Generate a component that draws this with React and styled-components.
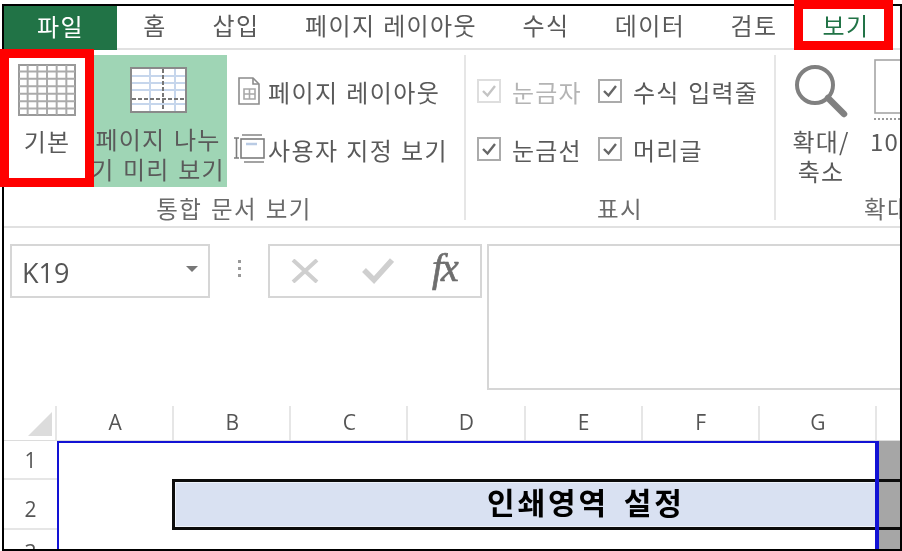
import styled, { createGlobalStyle } from "styled-components";

const KOREAN = `"Noto Sans CJK KR", "Noto Sans", sans-serif`;
const LATIN = `"Open Sans", "Noto Sans CJK KR", sans-serif`;

const GlobalStyle = createGlobalStyle`
  html, body {
    margin: 0;
    padding: 0;
    background: #ffffff;
  }
`;

const Page = styled.div`
  position: relative;
  width: 902px;
  height: 551px;
  overflow: hidden;
  padding: 4px 0 0 2px;
  box-sizing: border-box;
`;

const Frame = styled.div`
  width: 900px;
  height: 547px;
  box-sizing: border-box;
  border: 2px solid #000;
  overflow: hidden;
`;

const Screen = styled.div`
  filter: blur(0.45px);
  font-family: ${KOREAN};
  color: #5a5a5a;
`;

const RedBox = styled.div`
  position: absolute;
  box-sizing: border-box;
  border: 9px solid #ff0000;
  left: ${(p) => p.$left}px;
  top: ${(p) => p.$top}px;
  width: ${(p) => p.$width}px;
  height: ${(p) => p.$height}px;
`;

/* tabs */
const TabBar = styled.div`
  display: flex;
  height: 44px;
  box-sizing: border-box;
  border-bottom: 2px solid #e1e1e1;
`;

const Tab = styled.div`
  width: ${(p) => p.$width}px;
  flex: none;
  display: flex;
  align-items: center;
  justify-content: center;
  font-size: 24px;
  letter-spacing: 1.4px;
  word-spacing: 1px;
  white-space: nowrap;
  padding-bottom: 6px;
  box-sizing: border-box;
  background: ${(p) => (p.$file ? "#217346" : "transparent")};
  color: ${(p) => (p.$file ? "#ffffff" : p.$active ? "#217346" : "#5a5a5a")};
  height: ${(p) => (p.$file ? "44px" : "42px")};
`;

/* ribbon */
const Ribbon = styled.div`
  display: flex;
  height: 178px;
  box-sizing: border-box;
  border-bottom: 2px solid #e1e1e1;
  overflow: hidden;
`;

const Group = styled.div`
  flex: none;
  width: ${(p) => p.$width}px;
  margin-top: 5px;
  height: 165px;
  display: flex;
  flex-direction: column;
  box-sizing: border-box;
  border-right: ${(p) => (p.$last ? "none" : "2px solid #e6e6e6")};
`;

const GroupBody = styled.div`
  height: 132px;
  display: flex;
  padding-left: ${(p) => p.$pad || 0}px;
`;

const GroupLabel = styled.div`
  height: 33px;
  padding-top: 9px;
  padding-left: ${(p) => p.$pad || 0}px;
  box-sizing: border-box;
  display: flex;
  align-items: center;
  justify-content: ${(p) => (p.$pad ? "flex-start" : "center")};
  font-size: 23.5px;
  letter-spacing: 1.4px;
  word-spacing: 2px;
  white-space: nowrap;
  color: #6a6a6a;
`;

const BigButton = styled.div`
  flex: none;
  width: ${(p) => p.$width}px;
  height: 132px;
  box-sizing: border-box;
  padding: ${(p) => p.$top}px ${(p) => p.$right || 0}px 0 0;
  display: flex;
  flex-direction: column;
  align-items: center;
  background: ${(p) => (p.$active ? "#9fd5b5" : "transparent")};
`;

const ZoomButton = styled.div`
  flex: none;
  height: 132px;
  box-sizing: border-box;
  padding: 4px 0 0 4px;
  display: flex;
  flex-direction: column;
  align-items: flex-start;
`;

const ZoomPage = styled.div`
  margin-left: 4px;
`;

const BigLabel = styled.div`
  margin-top: ${(p) => p.$gap}px;
  font-size: 24px;
  line-height: 30px;
  letter-spacing: 1.2px;
  word-spacing: 2px;
  text-align: center;
  white-space: nowrap;
`;

const SmallColumn = styled.div`
  padding-top: 7px;
  flex: none;
`;

const SmallRow = styled.div`
  height: 58px;
  display: flex;
  align-items: center;
  font-size: 24px;
  letter-spacing: 1.4px;
  word-spacing: 1px;
  white-space: nowrap;
`;

const IconSlot = styled.div`
  width: 38px;
  margin-left: 3px;
  display: flex;
  justify-content: center;
`;

const CheckGrid = styled.div`
  display: grid;
  grid-template-columns: 121px auto;
  grid-auto-rows: 58px;
  padding-top: 7px;
`;

const CheckRow = styled.div`
  display: flex;
  align-items: center;
  gap: 11px;
  font-size: 24px;
  letter-spacing: 1.2px;
  word-spacing: 2px;
  white-space: nowrap;
  color: ${(p) => (p.$disabled ? "#b4b4b4" : "#5a5a5a")};
`;

const Box = styled.span`
  width: 24px;
  height: 24px;
  flex: none;
  box-sizing: border-box;
  border: 2px solid ${(p) => (p.$disabled ? "#dedede" : "#ababab")};
  display: flex;
  align-items: center;
  justify-content: center;
  color: ${(p) => (p.$disabled ? "#c4c4c4" : "#666666")};
`;

/* formula bar */
const FormulaRow = styled.div`
  height: 162px;
  box-sizing: border-box;
  padding: 16px 0 0 6px;
  display: flex;
  align-items: flex-start;
`;

const NameBox = styled.div`
  width: 200px;
  height: 54px;
  flex: none;
  box-sizing: border-box;
  border: 2px solid #d6d6d6;
  padding: 3px 10px 0;
  display: flex;
  align-items: center;
  justify-content: space-between;
  font-family: ${LATIN};
  font-size: 27px;
  color: #555555;
`;

const Caret = styled.span`
  width: 0;
  height: 0;
  border-left: 6px solid transparent;
  border-right: 6px solid transparent;
  border-top: 6px solid #777777;
  margin-bottom: 7px;
`;

const Grip = styled.div`
  width: 58px;
  height: 54px;
  flex: none;
  display: flex;
  flex-direction: column;
  align-items: center;
  justify-content: center;
  gap: 4px;
  padding-bottom: 6px;
  box-sizing: border-box;
`;

const GripDot = styled.span`
  width: 3px;
  height: 3px;
  background: #999999;
`;

const FormulaButtons = styled.div`
  width: 214px;
  height: 54px;
  flex: none;
  box-sizing: border-box;
  border: 2px solid #d6d6d6;
  padding-left: 21px;
  display: flex;
  align-items: center;
  color: #cfcfcf;
`;

const FxLabel = styled.span`
  font-family: "Liberation Serif", serif;
  font-style: italic;
  font-weight: 400;
  font-size: 40px;
  line-height: 1;
  color: #6e6e6e;
  -webkit-text-stroke: 0.7px #6e6e6e;
  margin: -6px 0 0 38px;
  letter-spacing: -2px;
`;

const FormulaInput = styled.div`
  flex: 1;
  height: 146px;
  margin-left: 5px;
  box-sizing: border-box;
  border: 2px solid #d6d6d6;
  border-right: none;
`;

/* sheet */
const ColumnRow = styled.div`
  height: 51px;
  box-sizing: border-box;
  padding-top: 16px;
  display: grid;
  grid-template-columns: 53px repeat(7, 117.14px) 1fr;
  border-bottom: 1px solid #dcdcdc;
`;

const CornerCell = styled.div`
  border-right: 2px solid #e6e6e6;
  box-sizing: border-box;
  padding: 6px 0 0 24px;
`;

const ColumnCell = styled.div`
  border-right: 2px solid #e6e6e6;
  display: flex;
  align-items: center;
  justify-content: center;
  font-family: ${LATIN};
  font-size: 21px;
  color: #555555;
  padding: 0 0 2px 1px;
`;

const SheetBody = styled.div`
  position: relative;
  display: flex;
`;

const RowHeads = styled.div`
  width: 53px;
  flex: none;
  display: flex;
  flex-direction: column;
`;

const RowHead = styled.div`
  height: ${(p) => p.$height}px;
  box-sizing: border-box;
  padding-top: ${(p) => p.$shift || 0}px;
  border-bottom: 2px solid #e6e6e6;
  display: flex;
  align-items: center;
  justify-content: center;
  font-family: ${LATIN};
  font-size: 21px;
  color: #555555;
`;

const Cells = styled.div`
  flex: 1;
  display: flex;
  flex-direction: column;
`;

const BlankRow = styled.div`
  height: ${(p) => p.$height}px;
  display: flex;
  justify-content: flex-end;
`;

const Spill = styled.div`
  width: 21px;
  flex: none;
  background: #a6a6a6;
`;

const TitleBand = styled.div`
  height: 51px;
  margin-left: 115px;
  box-sizing: border-box;
  border: solid #0c0c0c;
  border-width: 3px 0 3px 3px;
  display: flex;
`;

const TitleCell = styled.div`
  flex: 1;
  background: #d9e1f2;
  box-shadow: inset 0 0 0 1px #eef2fa;
  box-sizing: border-box;
  padding: 0 0 8px 312px;
  display: flex;
  align-items: center;
  font-size: 30px;
  font-weight: 700;
  letter-spacing: 2.9px;
  word-spacing: 5px;
  color: #000000;
`;

const PrintArea = styled.div`
  position: absolute;
  left: 53px;
  top: 0;
  bottom: 0;
  width: 822px;
  box-sizing: border-box;
  border: solid #1212d4;
  border-width: 2px 4px 0 2px;
`;

/* drawings */
const GridIcon = ({ width, height, cols, rows, color, line }) => {
  const xs = Array.from({ length: cols - 1 }, (_, i) => ((i + 1) * width) / cols);
  const ys = Array.from({ length: rows - 1 }, (_, i) => ((i + 1) * height) / rows);
  return (
    <svg width={width} height={height} style={{ display: "block" }}>
      <rect x="1" y="1" width={width - 2} height={height - 2} fill="#fff" stroke={color} strokeWidth="2" />
      {xs.map((x) => (
        <line key={x} x1={x} x2={x} y1="1" y2={height - 1} stroke={line} strokeWidth="2" />
      ))}
      {ys.map((y) => (
        <line key={y} y1={y} y2={y} x1="1" x2={width - 1} stroke={line} strokeWidth="2" />
      ))}
    </svg>
  );
};

const BreakIcon = () => (
  <svg width="57" height="46" style={{ display: "block" }}>
    <rect x="1" y="1" width="55" height="44" fill="#fff" stroke="#8a8a8a" strokeWidth="2" />
    {[20, 45].map((x) => (
      <line key={x} x1={x} x2={x} y1="2" y2="44" stroke="#c6d6ec" strokeWidth="2" />
    ))}
    {[9, 16, 23, 37].map((y) => (
      <line key={y} y1={y} y2={y} x1="2" x2="55" stroke="#c6d6ec" strokeWidth="2" />
    ))}
    <line x1="33" x2="33" y1="2" y2="44" stroke="#777" strokeWidth="2" strokeDasharray="4 2" />
    <line y1="32" y2="32" x1="2" x2="55" stroke="#777" strokeWidth="2" strokeDasharray="4 2" />
  </svg>
);

const PageLayoutIcon = () => (
  <svg width="24" height="28" fill="none" stroke="#8c8c8c" strokeWidth="1.6" style={{ display: "block" }}>
    <path d="M2 1h14l6 6v20H2z" />
    <path d="M16 1v6h6" />
    <path d="M7 12h11v10H7zM12.5 12v10M7 17h11" stroke="#a8a8a8" />
  </svg>
);

const CustomViewIcon = () => (
  <svg width="32" height="30" fill="none" stroke="#7c7c7c" strokeWidth="1.6" style={{ display: "block" }}>
    <path d="M1 4h5M3.5 4v20M1 24h5" />
    <path d="M9 1h20" stroke="#8c8c8c" />
    <rect x="8" y="5" width="23" height="19" />
    <path d="M13 10h11" stroke="#b9cbe4" strokeWidth="2.5" />
    <path d="M11 28h20" stroke="#8c8c8c" />
  </svg>
);

const TickIcon = () => (
  <svg width="16" height="14" fill="none" stroke="currentColor" strokeWidth="2.4">
    <path d="M2 7l4.5 4.5L14 2" />
  </svg>
);

const MagnifierIcon = () => (
  <svg width="54" height="54" fill="none" stroke="#808080" style={{ display: "block" }}>
    <circle cx="21" cy="21" r="18" strokeWidth="4" />
    <path d="M34 34l16 16" strokeWidth="6.5" strokeLinecap="round" />
  </svg>
);

const ZoomPageIcon = () => (
  <svg width="60" height="62" fill="none" style={{ display: "block" }}>
    <rect x="1" y="1" width="70" height="53" stroke="#a6a6a6" strokeWidth="1.6" />
    <line x1="0" x2="60" y1="60" y2="60" stroke="#999" strokeWidth="2" strokeDasharray="2 2" />
  </svg>
);

const CancelIcon = () => (
  <svg width="28" height="24" fill="none" stroke="currentColor" strokeWidth="4" style={{ display: "block" }}>
    <path d="M2 1l24 22M26 1L2 23" />
  </svg>
);

const EnterIcon = () => (
  <svg width="32" height="26" fill="none" stroke="currentColor" strokeWidth="5.5" style={{ display: "block", marginLeft: 43 }}>
    <path d="M2 12l10 10L30 2" />
  </svg>
);

const CornerIcon = () => (
  <svg width="24" height="24" style={{ display: "block" }}>
    <path d="M24 0v24H0z" fill="#dcdcdc" />
  </svg>
);

const tabs = [
  { label: "홈", width: 76 },
  { label: "삽입", width: 86 },
  { label: "페이지 레이아웃", width: 224 },
  { label: "수식", width: 86 },
  { label: "데이터", width: 122 },
  { label: "검토", width: 86 },
  { label: "보기", width: 98, active: true },
];

const columns = ["A", "B", "C", "D", "E", "F", "G"];

export default function App() {
  return (
    <Page>
      <GlobalStyle />
      <Frame>
        <Screen>
          <TabBar>
            <Tab $file $width={113}>파일</Tab>
            {tabs.map((tab) => (
              <Tab key={tab.label} $width={tab.width} $active={tab.active}>
                {tab.label}
              </Tab>
            ))}
          </TabBar>

          <Ribbon>
            <Group $width={462}>
              <GroupBody>
                <BigButton $width={90} $top={9} $right={4}>
                  <GridIcon width={58} height={52} cols={6} rows={7} color="#9a9a9a" line="#ababab" />
                  <BigLabel $gap={10}>기본</BigLabel>
                </BigButton>
                <BigButton $width={133} $active $top={12} $right={5}>
                  <BreakIcon />
                  <BigLabel $gap={11}>
                    페이지 나누
                    <br />
                    기 미리 보기
                  </BigLabel>
                </BigButton>
                <SmallColumn>
                  <SmallRow>
                    <IconSlot><PageLayoutIcon /></IconSlot>
                    페이지 레이아웃
                  </SmallRow>
                  <SmallRow>
                    <IconSlot><CustomViewIcon /></IconSlot>
                    사용자 지정 보기
                  </SmallRow>
                </SmallColumn>
              </GroupBody>
              <GroupLabel>통합 문서 보기</GroupLabel>
            </Group>

            <Group $width={310}>
              <GroupBody $pad={11}>
                <CheckGrid>
                  <CheckRow $disabled>
                    <Box $disabled><TickIcon /></Box>
                    눈금자
                  </CheckRow>
                  <CheckRow>
                    <Box><TickIcon /></Box>
                    수식 입력줄
                  </CheckRow>
                  <CheckRow>
                    <Box><TickIcon /></Box>
                    눈금선
                  </CheckRow>
                  <CheckRow>
                    <Box><TickIcon /></Box>
                    머리글
                  </CheckRow>
                </CheckGrid>
              </GroupBody>
              <GroupLabel>표시</GroupLabel>
            </Group>

            <Group $width={130} $last>
              <GroupBody>
                <BigButton $width={90} $top={9}>
                  <MagnifierIcon />
                  <BigLabel $gap={8}>
                    확대/
                    <br />
                    축소
                  </BigLabel>
                </BigButton>
                <ZoomButton>
                  <ZoomPage><ZoomPageIcon /></ZoomPage>
                  <BigLabel $gap={5}>100%</BigLabel>
                </ZoomButton>
              </GroupBody>
              <GroupLabel $pad={88}>확대/축소</GroupLabel>
            </Group>
          </Ribbon>

          <FormulaRow>
            <NameBox>
              K19
              <Caret />
            </NameBox>
            <Grip>
              <GripDot />
              <GripDot />
              <GripDot />
            </Grip>
            <FormulaButtons>
              <CancelIcon />
              <EnterIcon />
              <FxLabel>fx</FxLabel>
            </FormulaButtons>
            <FormulaInput />
          </FormulaRow>

          <ColumnRow>
            <CornerCell><CornerIcon /></CornerCell>
            {columns.map((col) => (
              <ColumnCell key={col}>{col}</ColumnCell>
            ))}
          </ColumnRow>

          <SheetBody>
            <RowHeads>
              <RowHead $height={39}>1</RowHead>
              <RowHead $height={50} $shift={9}>2</RowHead>
              <RowHead $height={40} $shift={6}>3</RowHead>
            </RowHeads>
            <Cells>
              <BlankRow $height={38}><Spill /></BlankRow>
              <TitleBand>
                <TitleCell>인쇄영역 설정</TitleCell>
                <Spill />
              </TitleBand>
              <BlankRow $height={40}><Spill /></BlankRow>
            </Cells>
            <PrintArea />
          </SheetBody>
        </Screen>
      </Frame>
      <RedBox $left={794} $top={0} $width={99} $height={50} />
      <RedBox $left={0} $top={49} $width={94} $height={138} />
    </Page>
  );
}
